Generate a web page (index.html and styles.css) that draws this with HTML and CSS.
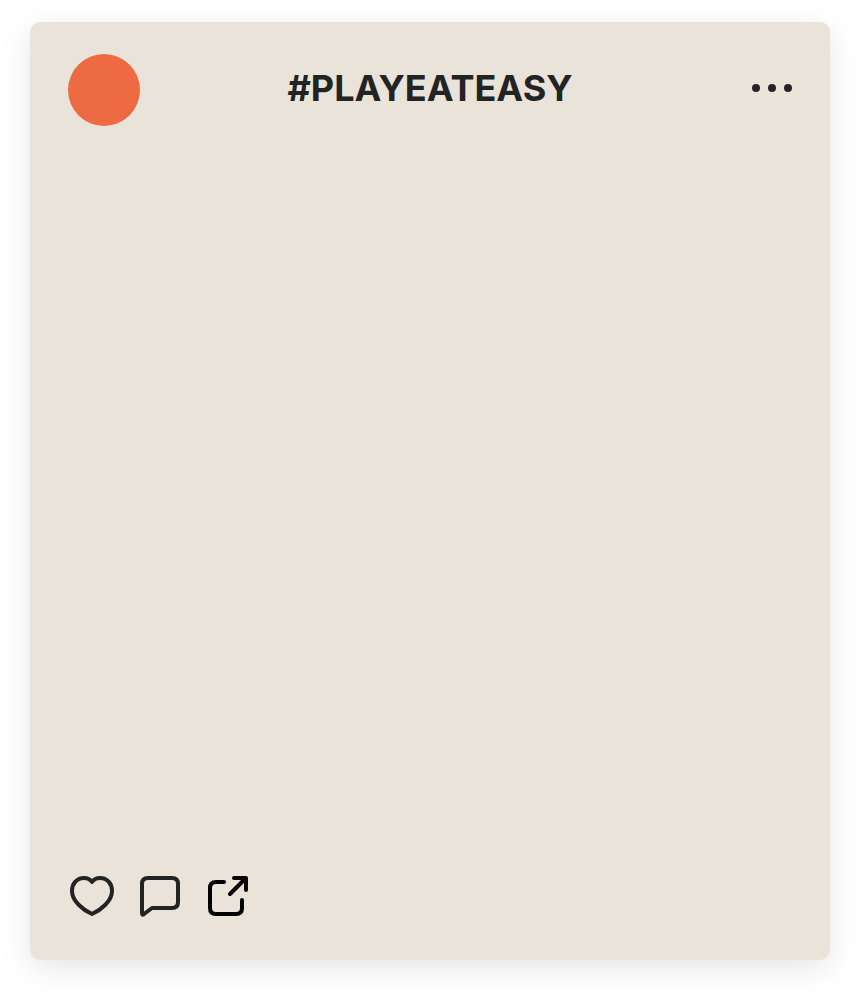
FILE: index.html
```html
<!DOCTYPE html>
<html lang="en">
<head>
<meta charset="utf-8">
<meta name="viewport" content="width=device-width, initial-scale=1">
<title>#PLAYEATEASY</title>
<link rel="stylesheet" href="styles.css">
</head>
<body>
<article class="post">
  <header class="post-header">
    <div class="avatar"></div>
    <h1 class="title">#PLAYEATEASY</h1>
    <button class="more" type="button" aria-label="More options">
      <svg width="40" height="8" viewBox="0 0 40 8" fill="currentColor"><circle cx="4" cy="4" r="4"/><circle cx="20" cy="4" r="4"/><circle cx="36" cy="4" r="4"/></svg>
    </button>
  </header>
  <footer class="actions">
    <button class="action" type="button" aria-label="Like">
      <svg width="48" height="48" viewBox="0 0 48 48"><path d="M24 10C22 7 19 6 16 6C9 6 4 11.500 4 19C4 29 15 38 24 42C33 38 44 29 44 19C44 11.500 39 6 32 6C29 6 26 7 24 10Z"/></svg>
    </button>
    <button class="action" type="button" aria-label="Comment">
      <svg width="48" height="48" viewBox="0 0 48 48"><path d="M12 6H36Q42 6 42 12V30Q42 36 36 36H16L8 42Q6 44 6 41V12Q6 6 12 6Z"/></svg>
    </button>
    <button class="action action-share" type="button" aria-label="Share">
      <svg width="48" height="48" viewBox="0 0 48 48"><path d="M20 10H12Q6 10 6 16V36Q6 42 12 42H32Q38 42 38 36V28M30 6H42V18M42 6L26 22"/></svg>
    </button>
  </footer>
</article>
</body>
</html>
```
FILE: styles.css
```css
* { box-sizing: border-box; }
body { margin: 0; background: #fff; font-family: Inter, "Liberation Sans", sans-serif; }
.post {
  min-height: calc(100vh - 60px);
  margin: 22px 30px 38px;
  padding: 32px 38px 40px;
  display: flex;
  flex-direction: column;
  justify-content: space-between;
  background: #eae3da;
  border-radius: 10px;
  box-shadow: 0 8px 30px rgba(0, 0, 0, 0.1);
  color: #222323;
}
.post-header { display: grid; grid-template-columns: 1fr auto 1fr; align-items: center; }
.avatar { width: 72px; height: 72px; border-radius: 50%; background: #ee6a42; }
.title { margin: 0; font-size: 36px; line-height: 44px; font-weight: 700; }
.more, .action { display: block; padding: 0; border: 0; background: none; color: inherit; cursor: pointer; }
.more { justify-self: end; }
.title, .more { padding-bottom: 4px; }
.more svg, .action svg { display: block; }
.actions { display: flex; gap: 20px; }
.action svg { fill: none; stroke: currentColor; stroke-width: 4; stroke-linecap: round; stroke-linejoin: round; }
.action-share { color: #000; }
```
